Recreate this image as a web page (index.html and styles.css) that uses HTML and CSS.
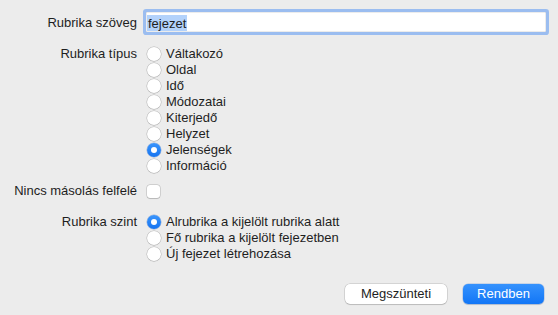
FILE: index.html
```html
<!DOCTYPE html>
<html lang="hu">
<head>
<meta charset="utf-8">
<link rel="stylesheet" href="styles.css">
</head>
<body>
<div class="dialog">
  <div class="row row-text">
    <div class="label">Rubrika szöveg</div>
    <div class="field"><span class="sel">fejezet</span></div>
  </div>

  <div class="row row-type">
    <div class="label">Rubrika típus</div>
    <div class="options">
      <div class="opt"><span class="radio"></span>Váltakozó</div>
      <div class="opt"><span class="radio"></span>Oldal</div>
      <div class="opt"><span class="radio"></span>Idő</div>
      <div class="opt"><span class="radio"></span>Módozatai</div>
      <div class="opt"><span class="radio"></span>Kiterjedő</div>
      <div class="opt"><span class="radio"></span>Helyzet</div>
      <div class="opt"><span class="radio on"></span>Jelenségek</div>
      <div class="opt"><span class="radio"></span>Információ</div>
    </div>
  </div>

  <div class="row row-check">
    <div class="label">Nincs másolás felfelé</div>
    <div class="options">
      <div class="opt"><span class="check"></span></div>
    </div>
  </div>

  <div class="row row-level">
    <div class="label">Rubrika szint</div>
    <div class="options">
      <div class="opt"><span class="radio on"></span>Alrubrika a kijelölt rubrika alatt</div>
      <div class="opt"><span class="radio"></span>Fő rubrika a kijelölt fejezetben</div>
      <div class="opt"><span class="radio"></span>Új fejezet létrehozása</div>
    </div>
  </div>

  <div class="buttons">
    <button class="btn">Megszünteti</button>
    <button class="btn primary">Rendben</button>
  </div>
</div>
</body>
</html>
```

FILE: styles.css
```css
* { box-sizing: border-box; }
html, body {
  margin: 0;
  padding: 0;
  background: #ececec;
}
body {
  width: 558px;
  height: 315px;
  overflow: hidden;
  font-family: "Liberation Sans", Arial, sans-serif;
  font-size: 13px;
  color: #1e1e1e;
}
.dialog {
  display: flex;
  flex-direction: column;
  padding-top: 12px;
}
.row {
  display: grid;
  grid-template-columns: 137px 1fr;
  column-gap: 9px;
}
.label {
  text-align: right;
  line-height: 16px;
}
.row-text .label {
  align-self: center;
  padding-top: 2px;
}
.field {
  width: 400px;
  height: 20px;
  background: #fff;
  box-shadow: 0 0 0 3px #9bbdf0, inset 0 0 0 0.5px rgba(0,0,0,0.15);
  border-radius: 1px;
  padding: 3px 0 0 1px;
  line-height: 16px;
}
.sel {
  display: inline-block;
  background: #b3d2fb;
  padding: 1px 1px 0;
  height: 16px;
  line-height: 16px;
}
.row-type { margin-top: 14px; }
.row-check { margin-top: 9px; }
.row-level { margin-top: 15px; }
.options {
  display: flex;
  flex-direction: column;
}
.opt {
  display: flex;
  align-items: center;
  height: 16px;
  line-height: 16px;
  white-space: nowrap;
}
.radio {
  width: 14px;
  height: 14px;
  border-radius: 50%;
  background: #fff;
  box-shadow: 0 0 0 0.5px rgba(0,0,0,0.22), 0 0.5px 1px rgba(0,0,0,0.12);
  margin: 0 5px 0 1px;
  flex: none;
  display: flex;
  align-items: center;
  justify-content: center;
}
.radio.on {
  background: linear-gradient(#3a95fc, #1674f0);
  box-shadow: 0 0 0 0.5px rgba(0,60,160,0.35);
}
.radio.on::after {
  content: "";
  width: 6px;
  height: 6px;
  border-radius: 50%;
  background: #fff;
}
.check {
  width: 13px;
  height: 13px;
  border-radius: 3px;
  background: #fff;
  box-shadow: 0 0 0 0.5px rgba(0,0,0,0.22), 0 0.5px 1px rgba(0,0,0,0.12);
  margin-left: 1px;
}
.buttons {
  display: flex;
  justify-content: flex-end;
  gap: 16px;
  margin-top: 22px;
  padding-right: 14px;
}
.btn {
  font-family: inherit;
  font-size: 13px;
  height: 20px;
  border: none;
  border-radius: 5px;
  padding: 0;
  background: #fff;
  color: #1e1e1e;
  box-shadow: 0 0 0 0.5px rgba(0,0,0,0.2), 0 1px 1px rgba(0,0,0,0.12);
  width: 102px;
  line-height: 20px;
}
.btn.primary {
  width: 81px;
  color: #fff;
  background: linear-gradient(#3592fd, #1276f6);
  box-shadow: 0 0 0 0.5px rgba(0,80,200,0.3), 0 1px 1px rgba(0,0,0,0.12);
}
```
